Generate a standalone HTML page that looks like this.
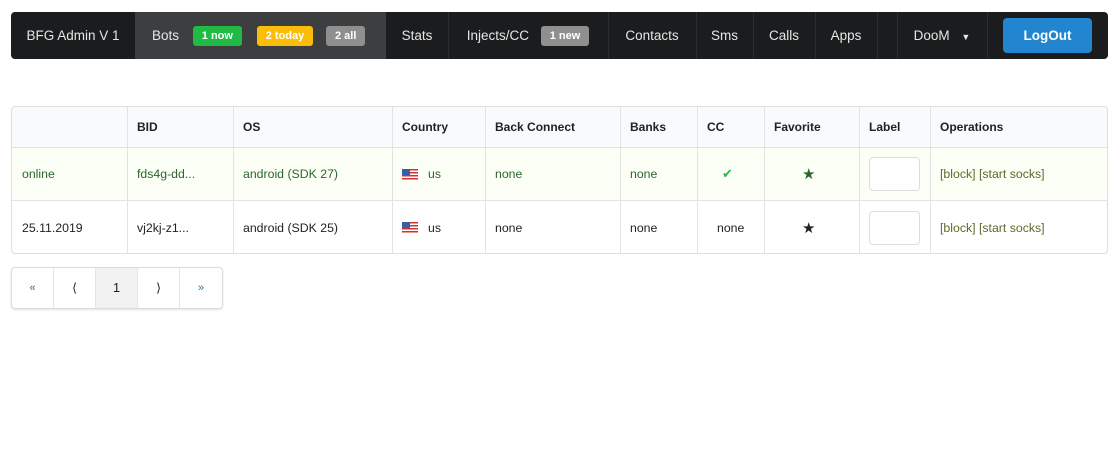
<!DOCTYPE html>
<html><head><style>
*{box-sizing:border-box;margin:0;padding:0}
body{width:1119px;height:462px;background:#fff;font-family:"Liberation Sans",sans-serif;font-size:12.3px;color:#222;position:relative;overflow:hidden}
.a{position:absolute}
.nav{left:11px;top:12px;width:1097px;height:47px;background:#1b1c1d;border-radius:4px}
.ni{position:absolute;top:0;height:47px;line-height:47px;color:#e6e6e6;font-size:13.5px;text-align:center}
.dv{position:absolute;top:0;width:1px;height:47px;background:#2c2d2e}
.lb{display:inline-block;height:20px;line-height:20px;padding:0 9px;border-radius:3px;color:#fff;font-size:11px;font-weight:bold;vertical-align:middle}
.tb{left:11px;top:106px;width:1097px;height:148px;border:1px solid #dededf;border-radius:4px;overflow:hidden}
.row{position:absolute;left:0;width:1095px}
.hd{font-weight:bold;font-size:12px}
.c{position:absolute;top:0;height:100%;display:flex;align-items:center;padding-left:10px}
.vl{position:absolute;top:0;width:1px;height:146px;background:#e3e3e3}
.flag{display:inline-block;width:16px;height:11px;margin-right:10px;background:repeating-linear-gradient(#c33 0 1.5px,#fff 1.5px 3px);position:relative}
.flag:before{content:"";position:absolute;left:0;top:0;width:8px;height:6px;background:#3b5ea8}
.inp{width:51px;height:34px;border:1px solid #ddd;border-radius:4px;background:#fff}
.pg{left:11px;top:267px;width:212px;height:42px;border:1px solid #dcdcdc;border-radius:4px;box-shadow:0 1px 2px rgba(0,0,0,.12);overflow:hidden}
.pc{position:absolute;top:0;width:42px;height:40px;line-height:40px;text-align:center;border-right:1px solid #e5e5e5}
</style></head><body>
<div class="a nav">
<div class="ni" style="left:0;width:124px">BFG Admin V 1</div>
<div class="ni" style="left:124px;width:251px;background:#3d3e40;text-align:left;padding-left:17px">Bots <span class="lb" style="background:#21ba45;margin-left:10px">1 now</span> <span class="lb" style="background:#fbbd08;margin-left:11px">2 today</span> <span class="lb" style="background:#8f8f8f;margin-left:9px">2 all</span></div>
<div class="ni" style="left:375px;width:62px">Stats</div>
<div class="dv" style="left:437px"></div>
<div class="ni" style="left:437px;width:160px">Injects/CC <span class="lb" style="background:#8f8f8f;margin-left:8px">1 new</span></div>
<div class="dv" style="left:597px"></div>
<div class="ni" style="left:597px;width:88px">Contacts</div>
<div class="dv" style="left:685px"></div>
<div class="ni" style="left:685px;width:57px">Sms</div>
<div class="dv" style="left:742px"></div>
<div class="ni" style="left:742px;width:62px">Calls</div>
<div class="dv" style="left:804px"></div>
<div class="ni" style="left:804px;width:62px">Apps</div>
<div class="dv" style="left:866px"></div>
<div class="dv" style="left:886px"></div>
<div class="ni" style="left:886px;width:90px">DooM <span style="font-size:9px;margin-left:8px">▼</span></div>
<div class="dv" style="left:976px"></div>
<div style="position:absolute;left:992px;top:6px;width:89px;height:35px;background:#2185d0;border-radius:4px;color:#fff;font-weight:bold;text-align:center;line-height:35px;font-size:13.5px">LogOut</div>
</div>

<div class="a tb">
<div class="row hd" style="top:0;height:41px;background:#f9fafb;border-bottom:1px solid #e3e3e3">
<div class="c" style="left:115px">BID</div><div class="c" style="left:221px">OS</div><div class="c" style="left:380px">Country</div><div class="c" style="left:473px">Back Connect</div><div class="c" style="left:608px">Banks</div><div class="c" style="left:685px">CC</div><div class="c" style="left:752px">Favorite</div><div class="c" style="left:847px">Label</div><div class="c" style="left:918px">Operations</div>
</div>
<div class="row" style="top:41px;height:53px;background:#fcfff5;color:#2c662d;border-bottom:1px solid #e3e3e3">
<div class="c" style="left:0">online</div><div class="c" style="left:115px">fds4g-dd...</div><div class="c" style="left:221px">android (SDK 27)</div><div class="c" style="left:380px"><span class="flag"></span>us</div><div class="c" style="left:473px">none</div><div class="c" style="left:608px">none</div><div class="c" style="left:700px;color:#21ba45;font-size:13px">✔</div><div class="c" style="left:780px;font-size:15px;color:#2c662d">★</div><div class="c" style="left:847px"><div class="inp"></div></div><div class="c" style="left:918px;color:#5a6b2a">[block] [start socks]</div>
</div>
<div class="row" style="top:94px;height:53px">
<div class="c" style="left:0">25.11.2019</div><div class="c" style="left:115px">vj2kj-z1...</div><div class="c" style="left:221px">android (SDK 25)</div><div class="c" style="left:380px"><span class="flag"></span>us</div><div class="c" style="left:473px">none</div><div class="c" style="left:608px">none</div><div class="c" style="left:695px">none</div><div class="c" style="left:780px;font-size:15px">★</div><div class="c" style="left:847px"><div class="inp"></div></div><div class="c" style="left:918px;color:#5a6b2a">[block] [start socks]</div>
</div>
<div class="vl" style="left:115px"></div><div class="vl" style="left:221px"></div><div class="vl" style="left:380px"></div><div class="vl" style="left:473px"></div><div class="vl" style="left:608px"></div><div class="vl" style="left:685px"></div><div class="vl" style="left:752px"></div><div class="vl" style="left:847px"></div><div class="vl" style="left:918px"></div>
</div>

<div class="a pg">
<div class="pc" style="left:0;color:#2f6f9f;font-size:11px">«</div>
<div class="pc" style="left:42px">⟨</div>
<div class="pc" style="left:84px;background:#f2f2f2;font-size:13px">1</div>
<div class="pc" style="left:126px">⟩</div>
<div class="pc" style="left:168px;border:none;color:#2f6f9f;font-size:11px">»</div>
</div>
</body></html>
